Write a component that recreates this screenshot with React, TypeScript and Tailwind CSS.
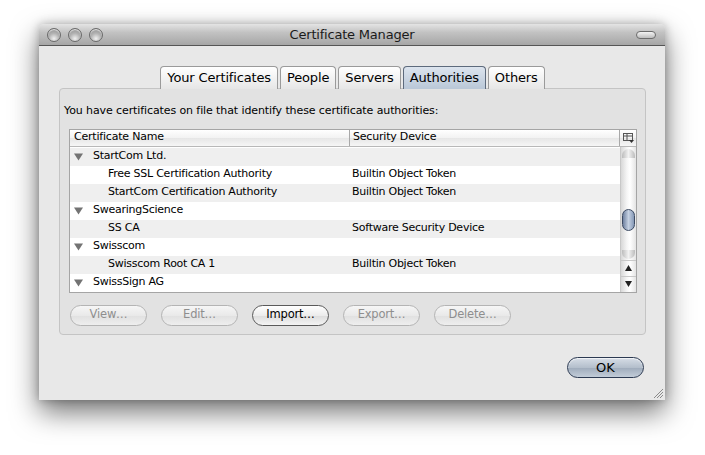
import React from "react";

const font = { fontFamily: '"DejaVu Sans", "Noto Sans", sans-serif' };

const rows = [
  { name: "StartCom Ltd.", device: "", group: true },
  { name: "Free SSL Certification Authority", device: "Builtin Object Token", group: false },
  { name: "StartCom Certification Authority", device: "Builtin Object Token", group: false },
  { name: "SwearingScience", device: "", group: true },
  { name: "SS CA", device: "Software Security Device", group: false },
  { name: "Swisscom", device: "", group: true },
  { name: "Swisscom Root CA 1", device: "Builtin Object Token", group: false },
  { name: "SwissSign AG", device: "", group: true },
];

const tabs = ["Your Certificates", "People", "Servers", "Authorities", "Others"];

function Light() {
  return (
    <div className="h-[14px] w-[14px] rounded-full border border-[#6a6a6a] bg-[radial-gradient(circle_at_50%_80%,#f0f0f0_0%,#b4b4b4_45%,#858585_100%)] shadow-[inset_0_1px_1px_rgba(255,255,255,0.8)]" />
  );
}

function Pill({ label, enabled }: { label: string; enabled?: boolean }) {
  return (
    <div
      className={
        "flex h-[21px] w-[77px] items-center justify-center rounded-full border text-[11.5px] tracking-[-0.2px] " +
        (enabled
          ? "border-[#5a5a5a] bg-[linear-gradient(#ffffff,#ececec_50%,#dcdcdc_51%,#f4f4f4)] text-black"
          : "border-[#b4b4b4] bg-[linear-gradient(#f6f6f6,#e9e9e9_50%,#e0e0e0_51%,#eeeeee)] text-[#8e8e8e]")
      }
    >
      {label}
    </div>
  );
}

function Triangle() {
  return (
    <svg width="9" height="8" viewBox="0 0 9 8" className="shrink-0">
      <path d="M0 0.5 H9 L4.5 7.5 Z" fill="#737373" />
    </svg>
  );
}

export default function App() {
  return (
    <div className="h-[455px] w-[705px] overflow-hidden bg-white pl-[39px] pt-[24px]" style={font}>
      <div className="flex h-[376px] w-[626px] flex-col rounded-t-[5px] bg-[#e8e8e8] shadow-[0_12px_28px_rgba(0,0,0,0.55),0_0_10px_rgba(0,0,0,0.25)]">
        {/* title bar */}
        <div className="flex h-[22px] items-center rounded-t-[5px] border-b border-[#555] bg-[linear-gradient(#e4e4e4,#c2c2c2_40%,#a6a6a6)] px-[8px]">
          <div className="flex w-[80px] gap-[7px]">
            <Light />
            <Light />
            <Light />
          </div>
          <div className="flex-1 text-center text-[13px] tracking-[-0.2px] text-[#1a1a1a]">Certificate Manager</div>
          <div className="flex w-[80px] justify-end pr-px">
            <div className="h-[8px] w-[20px] rounded-full border border-[#6c6c6c] bg-[linear-gradient(#f4f4f4,#bdbdbd)]" />
          </div>
        </div>

        {/* tabs */}
        <div className="mt-[20px] flex justify-center gap-[2px] pl-[1px]">
          {tabs.map((t) => {
            const sel = t === "Authorities";
            return (
              <div
                key={t}
                className={
                  "relative z-10 -mb-px flex h-[23px] items-center rounded-t-[4px] border border-b-0 px-[6px] text-[13px] tracking-[-0.15px] text-black " +
                  (sel
                    ? "border-[#5d6a7c] bg-[linear-gradient(#dce4ee,#b9c7d7)]"
                    : "border-[#9a9a9a] bg-[linear-gradient(#ffffff,#f0f0f0_60%,#e6e6e6)]")
                }
              >
                {t}
              </div>
            );
          })}
        </div>

        {/* group box */}
        <div className="ml-[20px] flex h-[247px] w-[587px] flex-col rounded-[4px] border border-[#c4c4c4] bg-[#e2e2e2] px-[9px]">
          <div className="-ml-[5px] mt-[14px] text-[11px] tracking-[-0.1px] text-black">
            You have certificates on file that identify these certificate authorities:
          </div>

          {/* table */}
          <div className="mt-[9px] flex h-[164px] w-[568px] flex-col border border-[#a5a5a5] bg-white">
            <div className="flex h-[17px] border-b border-[#b8b8b8] bg-[linear-gradient(#ffffff,#f2f2f2_50%,#e6e6e6_51%,#f6f6f6)] text-[11px] tracking-[-0.2px] text-black">
              <div className="flex w-[280px] items-center border-r border-[#a8a8a8] pl-[4px]">Certificate Name</div>
              <div className="flex w-[270px] items-center border-r border-[#a8a8a8] pl-[3px]">Security Device</div>
              <div className="flex flex-1 items-center justify-center">
                <svg width="11" height="10" viewBox="0 0 11 10">
                  <rect x="0.5" y="0.5" width="9" height="7" fill="none" stroke="#555" />
                  <path d="M0.5 3 H9.5 M4 0.5 V7.5" stroke="#555" />
                  <path d="M6 7 H11 L8.5 10 Z" fill="#333" />
                </svg>
              </div>
            </div>
            <div className="flex flex-1">
              <div className="flex-1 pt-px">
                {rows.map((r, i) => (
                  <div
                    key={r.name}
                    className={
                      "flex h-[18px] items-center text-[11px] tracking-[-0.25px] text-black " +
                      (i % 2 === 0 ? "bg-[#efefef]" : "bg-white")
                    }
                  >
                    <div className="flex w-[280px] items-center">
                      {r.group ? (
                        <div className="flex items-center gap-[10px] pl-[4px]">
                          <Triangle />
                          <span>{r.name}</span>
                        </div>
                      ) : (
                        <span className="pl-[38px]">{r.name}</span>
                      )}
                    </div>
                    <div className="pl-[2px]">{r.device}</div>
                  </div>
                ))}
              </div>
              {/* scrollbar */}
              <div className="flex w-[16px] flex-col border-l border-[#c8c8c8] bg-[linear-gradient(90deg,#d8d8d8,#f6f6f6_40%,#ffffff_60%,#e4e4e4)]">
                <div className="relative flex-1">
                  <div className="absolute left-[1px] top-[2px] h-[9px] w-[13px] rounded-t-full bg-[linear-gradient(90deg,#bcbcbc,#f2f2f2,#bcbcbc)]" />
                  <div className="absolute left-[1px] top-[62px] h-[22px] w-[13px] rounded-full border border-[#3d4b63] bg-[linear-gradient(90deg,#6f81a0,#c5d1e2_50%,#8598b6)]" />
                  <div className="absolute bottom-[1px] left-[1px] h-[9px] w-[13px] rounded-b-full bg-[linear-gradient(90deg,#bcbcbc,#f2f2f2,#bcbcbc)]" />
                </div>
                <div className="flex h-[16px] items-center justify-center border-t border-[#c8c8c8]">
                  <svg width="7" height="6" viewBox="0 0 7 6"><path d="M3.5 0 L7 6 H0 Z" fill="#222" /></svg>
                </div>
                <div className="flex h-[16px] items-center justify-center border-t border-[#c8c8c8]">
                  <svg width="7" height="6" viewBox="0 0 7 6"><path d="M0 0 H7 L3.5 6 Z" fill="#222" /></svg>
                </div>
              </div>
            </div>
          </div>

          {/* buttons */}
          <div className="ml-px mt-[12px] flex gap-[14px]">
            <Pill label="View…" />
            <Pill label="Edit…" />
            <Pill label="Import…" enabled />
            <Pill label="Export…" />
            <Pill label="Delete…" />
          </div>
        </div>

        {/* footer */}
        <div className="relative flex flex-1 items-start justify-end pr-[21px] pt-[22px]">
          <div className="flex h-[21px] w-[77px] items-center justify-center rounded-full border border-[#2c3a52] bg-[linear-gradient(#d6dde6,#b4bfcc_50%,#9eabbb_51%,#c2ccd8)] text-[13px] text-black shadow-[inset_0_1px_1px_rgba(255,255,255,0.7)]">
            OK
          </div>
          <svg width="11" height="11" viewBox="0 0 11 11" className="absolute bottom-[1px] right-[1px]">
            <path d="M10 1 L1 10 M10 4 L4 10 M10 7 L7 10" stroke="#8a8a8a" strokeWidth="1" />
          </svg>
        </div>
      </div>
    </div>
  );
}
